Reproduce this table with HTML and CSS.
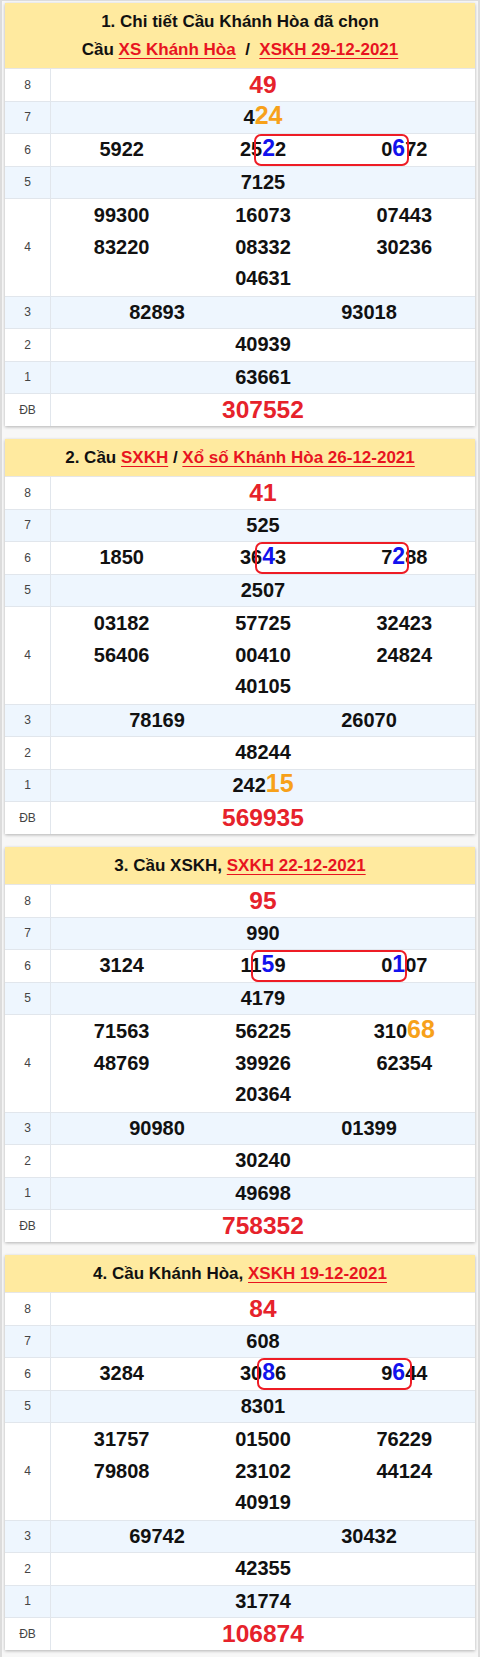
FILE: index.html
```html
<!DOCTYPE html>
<html lang="vi">
<head>
<meta charset="utf-8">
<title>Cầu Khánh Hòa</title>
<link rel="stylesheet" href="styles.css">
</head>
<body>
<div class="page">

  <section class="card">
    <header class="card-head">
      <div class="head-line">1. Chi tiết Cầu Khánh Hòa đã chọn</div>
      <div class="head-line">Cầu <a href="#">XS Khánh Hòa</a> &nbsp;/&nbsp; <a href="#">XSKH 29-12-2021</a></div>
    </header>
    <div class="tbl">
      <div class="row"><div class="lbl">8</div><div class="val"><span class="num big red">49</span></div></div>
      <div class="row alt"><div class="lbl">7</div><div class="val"><span class="num">4<span class="or">24</span></span></div></div>
      <div class="row"><div class="lbl">6</div><div class="val cols3">
        <span class="num">5922</span><span class="num">25<span class="bl">2</span>2</span><span class="num">0<span class="bl">6</span>72</span>
        <span class="box" style="left:203px;width:155px"></span>
      </div></div>
      <div class="row alt"><div class="lbl">5</div><div class="val"><span class="num">7125</span></div></div>
      <div class="row"><div class="lbl">4</div><div class="val cols3 multi">
        <span class="num">99300</span><span class="num">16073</span><span class="num">07443</span>
        <span class="num">83220</span><span class="num">08332</span><span class="num">30236</span>
        <span class="num">04631</span>
      </div></div>
      <div class="row alt"><div class="lbl">3</div><div class="val cols2"><span class="num">82893</span><span class="num">93018</span></div></div>
      <div class="row"><div class="lbl">2</div><div class="val"><span class="num">40939</span></div></div>
      <div class="row alt"><div class="lbl">1</div><div class="val"><span class="num">63661</span></div></div>
      <div class="row"><div class="lbl">ĐB</div><div class="val"><span class="num big red">307552</span></div></div>
    </div>
  </section>

  <section class="card">
    <header class="card-head">
      <div class="head-line">2. Cầu <a href="#">SXKH</a> / <a href="#">Xổ số Khánh Hòa 26-12-2021</a></div>
    </header>
    <div class="tbl">
      <div class="row"><div class="lbl">8</div><div class="val"><span class="num big red">41</span></div></div>
      <div class="row alt"><div class="lbl">7</div><div class="val"><span class="num">525</span></div></div>
      <div class="row"><div class="lbl">6</div><div class="val cols3">
        <span class="num">1850</span><span class="num">36<span class="bl">4</span>3</span><span class="num">7<span class="bl">2</span>88</span>
        <span class="box" style="left:204px;width:154px"></span>
      </div></div>
      <div class="row alt"><div class="lbl">5</div><div class="val"><span class="num">2507</span></div></div>
      <div class="row"><div class="lbl">4</div><div class="val cols3 multi">
        <span class="num">03182</span><span class="num">57725</span><span class="num">32423</span>
        <span class="num">56406</span><span class="num">00410</span><span class="num">24824</span>
        <span class="num">40105</span>
      </div></div>
      <div class="row alt"><div class="lbl">3</div><div class="val cols2"><span class="num">78169</span><span class="num">26070</span></div></div>
      <div class="row"><div class="lbl">2</div><div class="val"><span class="num">48244</span></div></div>
      <div class="row alt"><div class="lbl">1</div><div class="val"><span class="num">242<span class="or">15</span></span></div></div>
      <div class="row"><div class="lbl">ĐB</div><div class="val"><span class="num big red">569935</span></div></div>
    </div>
  </section>

  <section class="card">
    <header class="card-head">
      <div class="head-line">3. Cầu XSKH, <a href="#">SXKH 22-12-2021</a></div>
    </header>
    <div class="tbl">
      <div class="row"><div class="lbl">8</div><div class="val"><span class="num big red">95</span></div></div>
      <div class="row alt"><div class="lbl">7</div><div class="val"><span class="num">990</span></div></div>
      <div class="row"><div class="lbl">6</div><div class="val cols3">
        <span class="num">3124</span><span class="num">11<span class="bl">5</span>9</span><span class="num">0<span class="bl">1</span>07</span>
        <span class="box" style="left:200px;width:156px"></span>
      </div></div>
      <div class="row alt"><div class="lbl">5</div><div class="val"><span class="num">4179</span></div></div>
      <div class="row"><div class="lbl">4</div><div class="val cols3 multi">
        <span class="num">71563</span><span class="num">56225</span><span class="num">310<span class="or">68</span></span>
        <span class="num">48769</span><span class="num">39926</span><span class="num">62354</span>
        <span class="num">20364</span>
      </div></div>
      <div class="row alt"><div class="lbl">3</div><div class="val cols2"><span class="num">90980</span><span class="num">01399</span></div></div>
      <div class="row"><div class="lbl">2</div><div class="val"><span class="num">30240</span></div></div>
      <div class="row alt"><div class="lbl">1</div><div class="val"><span class="num">49698</span></div></div>
      <div class="row"><div class="lbl">ĐB</div><div class="val"><span class="num big red">758352</span></div></div>
    </div>
  </section>

  <section class="card">
    <header class="card-head">
      <div class="head-line">4. Cầu Khánh Hòa, <a href="#">XSKH 19-12-2021</a></div>
    </header>
    <div class="tbl">
      <div class="row"><div class="lbl">8</div><div class="val"><span class="num big red">84</span></div></div>
      <div class="row alt"><div class="lbl">7</div><div class="val"><span class="num">608</span></div></div>
      <div class="row"><div class="lbl">6</div><div class="val cols3">
        <span class="num">3284</span><span class="num">30<span class="bl">8</span>6</span><span class="num">9<span class="bl">6</span>44</span>
        <span class="box" style="left:206px;width:155px"></span>
      </div></div>
      <div class="row alt"><div class="lbl">5</div><div class="val"><span class="num">8301</span></div></div>
      <div class="row"><div class="lbl">4</div><div class="val cols3 multi">
        <span class="num">31757</span><span class="num">01500</span><span class="num">76229</span>
        <span class="num">79808</span><span class="num">23102</span><span class="num">44124</span>
        <span class="num">40919</span>
      </div></div>
      <div class="row alt"><div class="lbl">3</div><div class="val cols2"><span class="num">69742</span><span class="num">30432</span></div></div>
      <div class="row"><div class="lbl">2</div><div class="val"><span class="num">42355</span></div></div>
      <div class="row alt"><div class="lbl">1</div><div class="val"><span class="num">31774</span></div></div>
      <div class="row"><div class="lbl">ĐB</div><div class="val"><span class="num big red">106874</span></div></div>
    </div>
  </section>

</div>
</body>
</html>
```

FILE: styles.css
```css
* { box-sizing: border-box; }

html, body {
  margin: 0;
  padding: 0;
  background: #ffffff;
}

body {
  font-family: "Liberation Sans", Arial, sans-serif;
  color: #111;
}

.page {
  width: 480px;
  height: 1657px;
  overflow: hidden;
  border: 2px solid #dcdcdc;
  border-top-width: 1px;
  border-bottom: 0;
  padding: 2px 3px 3px 3px;
  background: #f7f7f7;
  display: flex;
  flex-direction: column;
  gap: 13.5px;
}

.card {
  flex: none;
  background: #fff;
  box-shadow: 0 1px 3px rgba(0, 0, 0, 0.28);
}

.card-head {
  background: #ffea9f;
  padding: 5px 4px 4px;
  text-align: center;
  font-weight: bold;
  font-size: 17px;
  color: #111;
  border-bottom: 1px solid #e6e6e6;
}

.head-line {
  line-height: 28px;
  height: 28px;
}

.card-head a {
  color: #e8141f;
  text-decoration: underline;
  text-decoration-thickness: 1px;
  text-underline-offset: 3px;
}

.row {
  display: grid;
  grid-template-columns: 46px 1fr;
  border-bottom: 1px solid #e1e6ec;
  background: #fff;
}

.row:last-child { border-bottom: 0; }

.row.alt { background: #eef6fe; }

.lbl {
  border-right: 1px solid #e1e6ec;
  display: flex;
  align-items: center;
  justify-content: center;
  font-size: 12px;
  color: #444;
}

.val {
  position: relative;
  height: 31.5px;
  line-height: 31.5px;
  text-align: center;
  display: flex;
  justify-content: center;
  align-items: center;
}

.val.cols3,
.val.cols2 {
  flex-wrap: wrap;
}

.val.cols3 .num { width: 33.3333%; }
.val.cols2 .num { width: 50%; }

.val.multi {
  height: 96.5px;
  padding: 1px 0;
  align-content: flex-start;
}

.num {
  font-size: 20px;
  font-weight: bold;
  color: #111;
  height: 31.5px;
}

.num.big { font-size: 24.5px; }

.red { color: #e6222b; }

.or {
  color: #f7a11a;
  font-size: 25px;
  line-height: 10px;
}

.bl {
  color: #1212ee;
  font-size: 23px;
  line-height: 10px;
}

.box {
  position: absolute;
  top: 0;
  bottom: 0;
  border: 2px solid #ee1c25;
  border-radius: 7px;
  pointer-events: none;
}
```
